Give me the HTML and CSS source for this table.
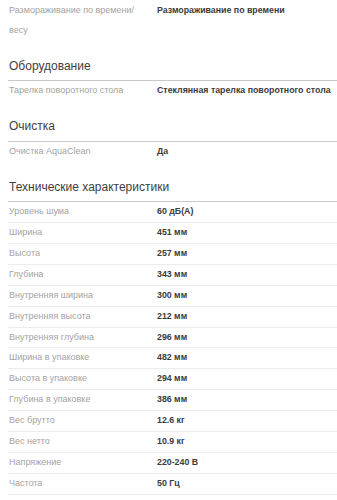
FILE: index.html
```html
<!DOCTYPE html>
<html lang="ru">
<head>
<meta charset="utf-8">
<link rel="stylesheet" href="styles.css">
</head>
<body>
<div class="specs">
  <section class="group group-first">
    <div class="row"><div class="label">Размораживание по времени/<wbr>весу</div><div class="value">Размораживание по времени</div></div>
  </section>
  <section class="group">
    <h2 class="title">Оборудование</h2>
    <div class="row"><div class="label">Тарелка поворотного стола</div><div class="value">Стеклянная тарелка поворотного стола</div></div>
  </section>
  <section class="group">
    <h2 class="title">Очистка</h2>
    <div class="row"><div class="label">Очистка AquaClean</div><div class="value">Да</div></div>
  </section>
  <section class="group group-lined">
    <h2 class="title">Технические характеристики</h2>
    <div class="row"><div class="label">Уровень шума</div><div class="value">60 дБ(А)</div></div>
    <div class="row"><div class="label">Ширина</div><div class="value">451 мм</div></div>
    <div class="row"><div class="label">Высота</div><div class="value">257 мм</div></div>
    <div class="row"><div class="label">Глубина</div><div class="value">343 мм</div></div>
    <div class="row"><div class="label">Внутренняя ширина</div><div class="value">300 мм</div></div>
    <div class="row"><div class="label">Внутренняя высота</div><div class="value">212 мм</div></div>
    <div class="row"><div class="label">Внутренняя глубина</div><div class="value">296 мм</div></div>
    <div class="row"><div class="label">Ширина в упаковке</div><div class="value">482 мм</div></div>
    <div class="row"><div class="label">Высота в упаковке</div><div class="value">294 мм</div></div>
    <div class="row"><div class="label">Глубина в упаковке</div><div class="value">386 мм</div></div>
    <div class="row"><div class="label">Вес брутто</div><div class="value">12.6 кг</div></div>
    <div class="row"><div class="label">Вес нетто</div><div class="value">10.9 кг</div></div>
    <div class="row"><div class="label">Напряжение</div><div class="value">220-240 В</div></div>
    <div class="row"><div class="label">Частота</div><div class="value">50 Гц</div></div>
  </section>
</div>
</body>
</html>
```

FILE: styles.css
```css
html, body {
  background: #ffffff;
}
body {
  margin: 0 0 0 8px;
  font-family: "Liberation Sans", Arial, sans-serif;
  color: #333333;
  overflow: hidden;
}
.specs {
  margin-top: 1px;
}
.group {
  display: flex;
  flex-direction: column;
}
.title {
  margin: 16px 0 0;
  padding: 0 0 4px 1px;
  font-size: 12px;
  font-weight: normal;
  line-height: 19.5px;
  color: #3e3e3e;
  border-bottom: 1px solid #c9c9c9;
}
.row {
  display: grid;
  grid-template-columns: 149px 1fr;
  font-size: 9px;
  line-height: 19.9px;
}
.group-lined .row {
  border-bottom: 1px solid #ececec;
}
.label {
  padding: 0 8px 0 1px;
  color: #a3a3a3;
}
.value {
  font-size: 8.8px;
  font-weight: bold;
  color: #3b3b3b;
}
```
